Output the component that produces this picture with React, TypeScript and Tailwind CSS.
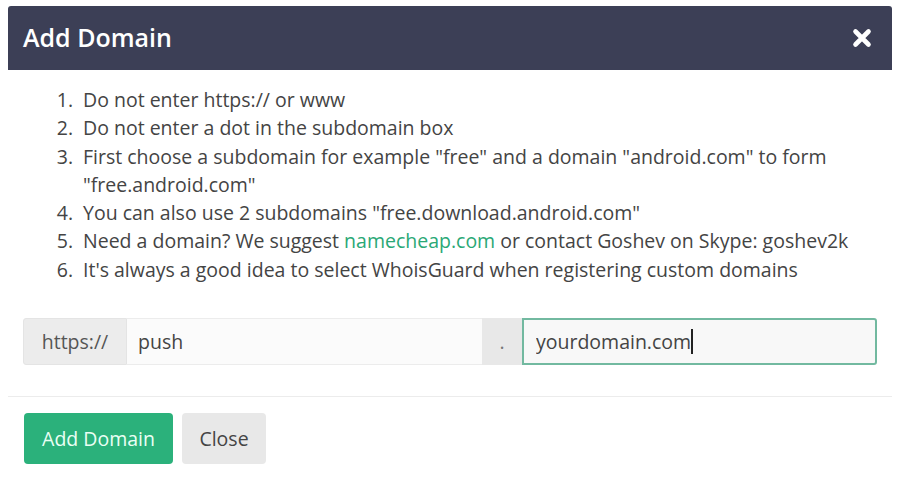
import { useState } from 'react';

// Modal "Add Domain" — lista de regras + grupo de input + rodapé com botões.
const rules: React.ReactNode[] = [
  'Do not enter https:// or www',
  'Do not enter a dot in the subdomain box',
  <>
    First choose a subdomain for example "free" and a domain "android.com" to form
    <br />
    "free.android.com"
  </>,
  'You can also use 2 subdomains "free.download.android.com"',
  <>
    Need a domain? We suggest <a className="font-medium text-[#2aa876]">namecheap.com</a> or contact Goshev on
    Skype: goshev2k
  </>,
  "It's always a good idea to select WhoisGuard when registering custom domains",
];

export default function App() {
  const [sub, setSub] = useState('push');
  const [domain, setDomain] = useState('yourdomain.com');

  return (
    <div className="h-[483px] w-[900px] overflow-hidden bg-white pt-[6px] font-['Open_Sans',sans-serif] text-[#444]">
      <div className="mx-[8px] bg-white">
        <div className="flex h-[64px] items-center justify-between rounded-t-[3px] bg-[#3c3f56] pl-[15px] pr-[20px]">
          <h2 className="text-[25px] font-semibold text-white">Add Domain</h2>
          <button className="text-white">
            <svg width="20" height="20" viewBox="0 0 20 20" fill="none">
              <path d="M3.5 3.5 16.5 16.5M16.5 3.5 3.5 16.5" stroke="currentColor" strokeWidth="4.6" strokeLinecap="round" />
            </svg>
          </button>
        </div>

        <div className="px-[15px] pt-[16px]">
          <ol className="m-0 text-[19.5px] leading-[28.3px]">
            {rules.map((r, i) => (
              <li key={i} className="flex">
                <span className="w-[60px] shrink-0 pr-[10px] text-right">{i + 1}.</span>
                <span>{r}</span>
              </li>
            ))}
          </ol>

          <div className="mt-[34px] grid h-[47px] grid-cols-[104px_minmax(0,1fr)_40px_minmax(0,1fr)] text-[19.5px]">
            <span className="flex items-center justify-center rounded-l-[3px] border border-[#e4e4e4] bg-[#ececec] text-[#555]">
              https://
            </span>
            <input
              value={sub}
              onChange={(e) => setSub(e.target.value)}
              className="w-full border-y border-[#ececec] bg-[#fbfbfb] pl-[11px] pr-[10px] text-[#444] outline-none"
            />
            <span className="flex items-center justify-center bg-[#e8e8e8] text-[#777]">.</span>
            <div className="relative flex">
              <input
                autoFocus
                value={domain}
                onChange={(e) => setDomain(e.target.value)}
                className="w-full rounded-r-[3px] border-2 border-[#72b9a0] bg-[#f8f8f8] pl-[12px] pr-[10px] text-[#444] outline-none"
              />
              {/* cursor de texto visível no print */}
              <span className="pointer-events-none absolute left-[169px] top-[11px] h-[25px] w-[1.5px] bg-[#222]" />
            </div>
          </div>
        </div>

        <div className="mt-[31px] border-t border-[#ececec] px-[16px] pt-[16px]">
          <div className="flex gap-[9px]">
            <button className="h-[51px] w-[149px] rounded-[4px] bg-[#2bb17b] text-[19.5px] text-[#eafff4]">
              Add Domain
            </button>
            <button className="h-[51px] w-[84px] rounded-[4px] bg-[#e8e8e8] text-[19.5px] text-[#444]">Close</button>
          </div>
        </div>
      </div>
    </div>
  );
}
